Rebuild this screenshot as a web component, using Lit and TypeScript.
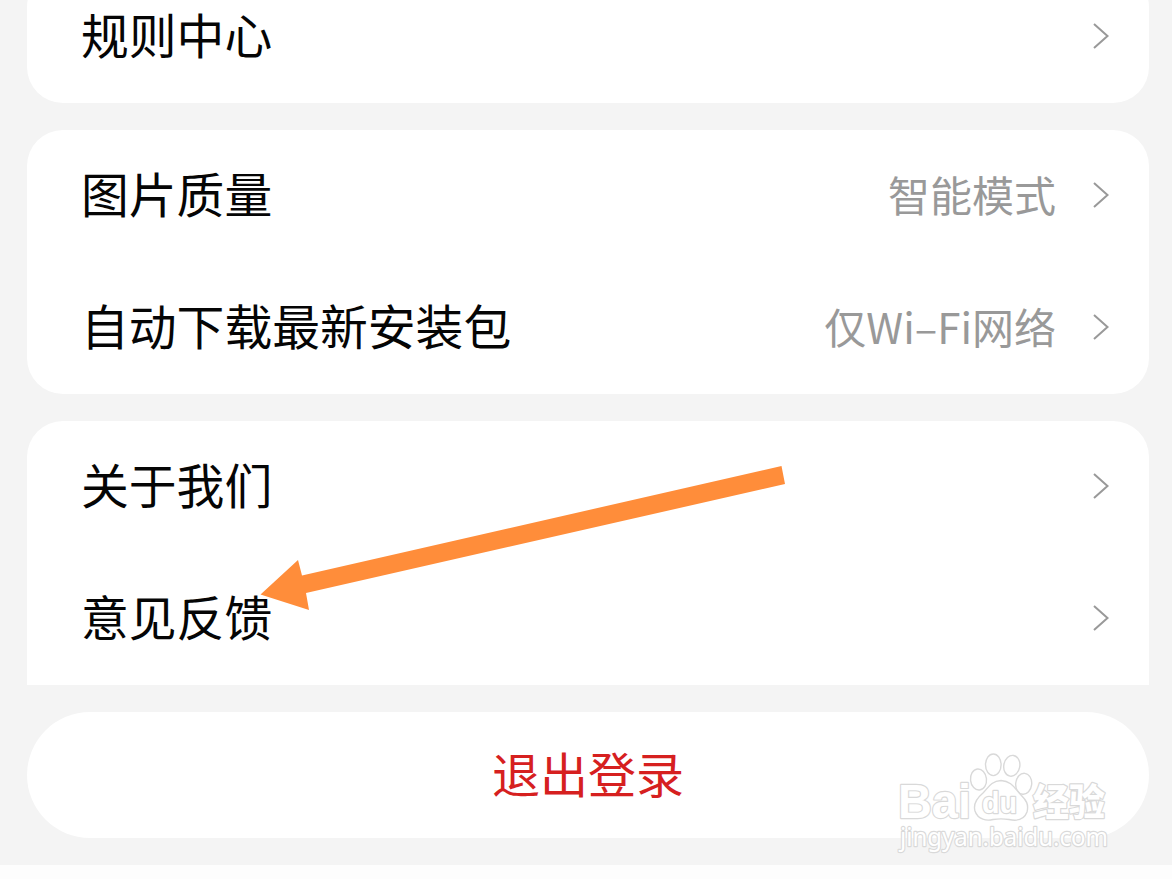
import { LitElement, html, css, svg } from 'lit';
import { customElement, property } from 'lit/decorators.js';

interface Item {
  label: string;
  value?: string;
}

const groups: Item[][] = [
  [{ label: '规则中心' }],
  [
    { label: '图片质量', value: '智能模式' },
    { label: '自动下载最新安装包', value: '仅Wi–Fi网络' },
  ],
  [{ label: '关于我们' }, { label: '意见反馈' }],
];

@customElement('setting-row')
export class SettingRow extends LitElement {
  @property() label = '';
  @property() value = '';

  static styles = css`
    :host {
      display: flex;
      align-items: center;
      height: 132px;
      padding: 0 39px 2px 54px;
      box-sizing: border-box;
    }

    .label {
      flex: 1;
      font-size: 47.8px;
      line-height: 60px;
      padding-bottom: 4px;
      color: #050505;
    }

    .value {
      font-size: 42px;
      line-height: 60px;
      padding-bottom: 3px;
      color: #999;
      margin-right: 36px;
    }

    svg {
      display: block;
      width: 18px;
      height: 28px;
      fill: none;
      stroke: #999;
      stroke-width: 2;
    }
  `;

  render() {
    return html`
      <span class="label">${this.label}</span>
      ${this.value ? html`<span class="value">${this.value}</span>` : ''}
      <svg viewBox="0 0 18 28"><path d="M2 2 L15.5 14 L2 26" /></svg>
    `;
  }
}

@customElement('site-watermark')
export class SiteWatermark extends LitElement {
  static styles = css`
    :host {
      display: block;
    }

    svg {
      display: block;
      width: 230px;
      height: 115px;
      fill: #fff;
      stroke: #d9d9d9;
      stroke-width: 1.4;
      stroke-linejoin: round;
    }

    text {
      paint-order: stroke;
      stroke-width: 2.4;
    }

    .latin {
      font-family: 'Liberation Sans', sans-serif;
      font-weight: bold;
    }

    .cn {
      font-family: 'Noto Sans CJK SC', sans-serif;
      font-weight: 900;
    }

    .url {
      font-family: 'Noto Sans', sans-serif;
    }
  `;

  render() {
    // cx, cy, rx, ry, rotation
    const toes = [
      [88.5, 29.5, 8, 10.5, -6],
      [103.3, 14.8, 7.8, 10.8, 0],
      [121.8, 15.8, 8, 10.5, 10],
      [133.7, 33.8, 8, 10.5, 6],
    ];
    return html`
      <svg viewBox="0 0 230 115">
        <text class="latin" x="8" y="68" font-size="48" textLength="73" lengthAdjust="spacingAndGlyphs">Bai</text>
        ${toes.map(
          ([x, y, rx, ry, r]) =>
            svg`<ellipse cx=${x} cy=${y} rx=${rx} ry=${ry} transform="rotate(${r} ${x} ${y})" />`
        )}
        <path d="M111 30.5 C101 31 98 38 93 43 C87 48 83 54 85 61 C88 70 97 71 103 69.5 C109 68.5 113 68.5 119 69.5 C126 71 134 70 137 62 C139 54 136 50 131 45 C125 39 122 31 111 30.5 Z" />
        <text class="latin" x="92" y="63" font-size="29" textLength="35" lengthAdjust="spacingAndGlyphs">du</text>
        <text class="cn" x="143" y="65.5" font-size="37" textLength="72" lengthAdjust="spacingAndGlyphs">经验</text>
        <text class="url" x="10" y="96" font-size="26" textLength="208" lengthAdjust="spacingAndGlyphs">jingyan.baidu.com</text>
      </svg>
    `;
  }
}

@customElement('app-root')
export class AppRoot extends LitElement {
  static styles = css`
    :host {
      display: block;
      position: relative;
      width: 1172px;
      height: 879px;
      overflow: hidden;
      background: #fdfdfd;
      font-family: 'Noto Sans CJK SC', sans-serif;
    }

    .page {
      display: flex;
      flex-direction: column;
      gap: 27px;
      height: 865px;
      padding: 0 23px 0 27px;
      box-sizing: border-box;
      background: #f4f4f4;
    }

    .group {
      flex: none;
      background: #fff;
      border-radius: 36px;
    }

    /* scrolled partly out of view */
    .group:first-child {
      margin-top: -29px;
    }

    .group:nth-child(3) {
      border-radius: 36px 36px 0 0;
    }

    .logout {
      flex: none;
      height: 126px;
      padding: 0 0 7px;
      border: none;
      border-radius: 63px;
      background: #fff;
      color: #d6201f;
      font-family: inherit;
      font-size: 48px;
    }

    .arrow {
      position: absolute;
      top: 0;
      left: 0;
      width: 1172px;
      height: 879px;
      fill: #ff8d3a;
      pointer-events: none;
    }

    site-watermark {
      position: absolute;
      left: 890px;
      top: 750px;
    }
  `;

  render() {
    return html`
      <div class="page">
        ${groups.map(
          items => html`
            <div class="group">
              ${items.map(
                item => html`<setting-row .label=${item.label} .value=${item.value ?? ''}></setting-row>`
              )}
            </div>
          `
        )}
        <button class="logout">退出登录</button>
      </div>
      <svg class="arrow" viewBox="0 0 1172 879">
        <polygon points="260.5,594.5 298,560 302,575.5 781.5,466 785,484 306,593 309,610" />
      </svg>
      <site-watermark></site-watermark>
    `;
  }
}
